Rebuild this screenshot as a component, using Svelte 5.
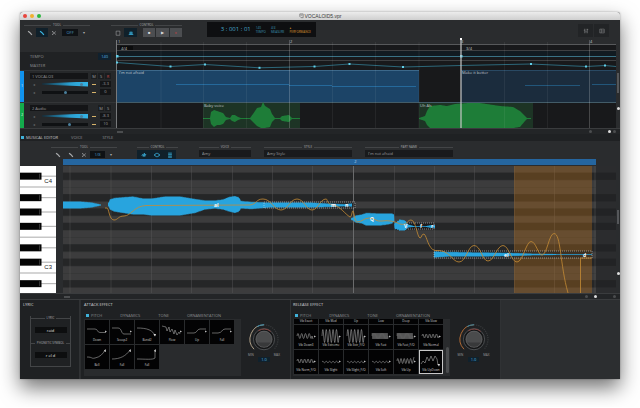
<script>
  const envelope = (pts, jag = 0) => {
    const top = [], bottom = [];
    for (let i = 0; i < pts.length - 1; i++) {
      const [x0, a0, b0] = pts[i], [x1, a1, b1] = pts[i + 1];
      for (let x = x0; x < x1; x += 1) {
        const t = (x - x0) / (x1 - x0);
        const thick = b0 + (b1 - b0) * t - (a0 + (a1 - a0) * t);
        const n = Math.round(x) % 2 ? Math.min(jag, thick / 5) : 0;
        top.push([x, a0 + (a1 - a0) * t + n]);
        bottom.push([x, b0 + (b1 - b0) * t - n]);
      }
    }
    const last = pts[pts.length - 1];
    top.push([last[0], last[1]]);
    bottom.push([last[0], last[2]]);
    return [...top, ...bottom.reverse()].map((p) => p.map((v) => v.toFixed(1)).join(',')).join(' ');
  };

  // Arrangement view
  const arrLines = [161, 203.5, 246.5, 332.5, 375.5, 419, 504.5, 547.5];
  const barLines = [289.5, 589.5];
  const master = [[117, 62.5], [170.5, 66.5], [205, 64.5], [259.5, 67.8], [314.5, 66.5], [349.5, 64], [403, 67], [461, 65.5], [531, 64], [586, 66.5], [605, 65.5], [616, 66.5]];
  const masterDots = master.filter((p) => p[0] !== 461 && p[0] !== 616);
  const greenWaves = [
    [[203, 118, 119], [210, 118, 119], [211, 112, 124], [214, 110, 127], [217, 111, 125], [220, 112, 125], [223, 113, 124], [226, 117, 120], [230, 118, 119], [232, 115, 121], [235, 115, 122], [238, 117, 120], [241, 118, 119], [250, 118, 119], [253, 114, 122], [257, 108, 126], [261, 107, 128], [263, 102, 128], [265, 106, 128], [270, 109, 127], [272, 114, 122], [275, 118, 119], [280, 118, 119], [282, 116, 121], [289, 115, 122], [292, 118, 119], [300, 118, 119]],
    [[419, 118, 119], [425, 116, 121], [427, 111, 125], [430, 106, 128], [440, 105, 128], [447, 106, 128], [455, 104, 128], [468, 103, 128], [480, 103, 128], [500, 106, 128], [513, 107, 128], [520, 111, 127], [525, 116, 121], [527, 118, 119], [531, 118, 119]]
  ];
  const arrLabels = [
    { x: 119, y: 70, text: "I'm not afraid" }, { x: 462, y: 70, text: 'Make it better' },
    { x: 204, y: 103, text: 'Baby voice' }, { x: 420, y: 103, text: 'Uh Ah' },
    { x: 121, y: 46, text: '4/4' }, { x: 466, y: 46, text: '3/4' },
    { x: 118, y: 39, text: '1' }, { x: 290, y: 39, text: '2' }, { x: 461, y: 39, text: '3' }, { x: 590, y: 39, text: '4' }
  ];

  // Piano roll
  const pitch = 86 / 12;
  const rows = Array.from({ length: 18 }, (_, i) => {
    const semitone = (((2 - i) % 12) + 12) % 12;
    return { y: 165.5 + i * pitch, black: [1, 3, 6, 8, 10].includes(semitone), semitone };
  });
  const blackRows = rows.filter((r) => r.black);
  const beats = [70, 111, 151.5, 191.5, 232.5, 272.5, 312.5, 394.5, 434.5, 474.5, 514.5, 554.5, 595];
  const notes = [
    [[63, 201, 209], [80, 201, 209], [92, 202, 208], [98, 203.5, 206.5], [101, 204.5, 205.5]],
    [[108, 203, 206], [110, 199, 210], [114, 197.5, 212], [120, 197, 213], [133, 196, 215], [143, 198, 215], [152, 198, 216], [165, 196, 216], [180, 196, 216], [195, 198.5, 213.5], [205, 200, 210], [215, 200, 209], [223, 199, 210], [229, 196.5, 212], [235, 195.5, 213.5], [239, 197, 212], [241, 200.5, 209], [252, 201.5, 209.5], [270, 202, 208], [310, 202, 208], [328, 203, 207.5], [345, 204, 206.5], [352, 203, 207]],
    [[351, 218, 220], [356, 215, 223], [362, 214, 224], [366, 212.5, 226], [380, 213, 226], [388, 213, 225], [392, 213, 224], [394, 214, 222], [394.5, 223, 229], [400, 219, 231], [405, 220, 231], [408, 224, 228], [414, 226, 227], [426, 226, 227], [430, 225, 228], [435, 225, 228]],
    [[434, 251, 258], [450, 251.5, 257], [480, 252, 257], [510, 252.5, 256.5], [535, 253.5, 255.5], [560, 254, 255], [580, 254, 255], [592, 254, 255]]
  ].map((p) => envelope(p, 1));
  const outlines = [[264, 202, 91, 6], [407, 223, 27, 6], [434, 251, 158, 7]];
  const pitchCurve = 'M105,208 H107 C109,208 109,220 114,220 C118,220 118,216 124,216 C131,216 134,206 146,205.500 L250,205 C257,204 256,199 263,199 C271,199 274,210 281,210 C288,210 290,199 297,199 C304,199 306,210 312,210 C318,210 320,199 326,199 C328,199 326,204 333,205 C340,206 345,214 350,217 C352,217 352,210 353,211 S355,222 357,222 C362,222 364,218 369,218 C375,218 376,222 382,221 C390,220 396,222 400,224 C407,226 407,220 411,220 C416,220 417,237 420,238 C422,238 421,234 424,234 C427,236 428,249 435,250.500 C450,249 452,262 459,262 C466,262 468,245.500 474,245.500 C481,245.500 482,261 488,261 C494,261 497,245.500 503,245.500 C509,245.500 511,262 517,262 C523,262 526,241.500 531,241.500 C536,241.500 538,255 542,255 C547,255 549,233.500 554,233.500 C561,233.500 560,265 568,293 M580.500,293 V258 H592';
  const phonemes = [
    { x: 214, y: 202, text: 'aI' }, { x: 331, y: 202, text: 'm' }, { x: 345, y: 202, text: 'n' }, { x: 370, y: 216, text: 'Q' },
    { x: 404, y: 223, text: 'V' }, { x: 420, y: 223, text: 'f' }, { x: 431, y: 223, text: 'r' }, { x: 504, y: 252, text: 'eI' }, { x: 583, y: 252, text: 'd' }
  ];

  const tracks = [
    { name: '1 VOCALO3', no: '1', color: '#1193ee', buttons: ['M', 'S', 'R'], gain: '-3.3', pan: '0', panAt: 50, tall: true },
    { name: '2 Audio', no: '2', color: '#14ab4c', buttons: ['M', 'S'], gain: '-8.3', pan: '10', panAt: 60, tall: false }
  ];

  // Effect thumbnails are drawn on a 24 x 18 grid
  const zig = (x, y, w, n, h) => {
    let d = `M${x},${y}`;
    for (let i = 0; i < n; i++) d += ` q${w / n / 4},${-h} ${w / n / 2},0 q${w / n / 4},${h} ${w / n / 2},0`;
    return d;
  };
  const attack = [
    { name: 'Down', d: 'M2,9 H10 C13,9 12,12.500 15,12.500 H21' },
    { name: 'Scoop2', d: 'M2,8 H8 C12,8 11,14 14,14 H21' },
    { name: 'Bend2', d: 'M2,8 C12,8 18,10 20,16', down: true },
    { name: 'Flow', d: 'M2,6 L6,7 L7,11 L9,7 L10,12 L12,9 L14,14 L15,10 L17,15 L19,12 L20,14' },
    { name: 'Up', d: 'M2,13 H9 C12,13 12,9 15,9 H21' },
    { name: 'Fall', d: 'M2,13 H8 C12,13 12,9 15,9 H21' },
    { name: 'Bell', d: 'M2,12 C8,12 6,14 10,13 C15,12 18,9 20,5', up: true },
    { name: 'Fall', d: 'M2,14 C10,14 16,11 20,5', up: true },
    { name: 'Fall', d: 'M2,14 C10,14 18,15 20,13 V5', up: true }
  ];
  const release = [
    { name: 'Vib Exact' }, { name: 'Vib Med' }, { name: 'Up' }, { name: 'Low' }, { name: 'Deep' }, { name: 'Vib Slow' },
    { name: 'Vib Down3', d: zig(3, 11, 15, 4, 5) + ' L19,14' },
    { name: 'Vib Extreme', d: zig(3, 11, 17, 5, 13) },
    { name: 'Vib Extr_F/O', d: zig(3, 11, 17, 5, 13) },
    { name: 'Vib Fast', d: zig(3, 11, 16, 14, 6), dense: true },
    { name: 'Vib Fast_F/O', d: zig(3, 11, 16, 14, 6), dense: true },
    { name: 'Vib Normal', d: zig(3, 11, 17, 5, 4) },
    { name: 'Vib Norm_F/O', d: zig(3, 11, 17, 5, 4) },
    { name: 'Vib Slight', d: zig(3, 12, 17, 5, 1.5) },
    { name: 'Vib Slight_F/O', d: zig(3, 12, 17, 5, 1.5) },
    { name: 'Vib Soft', d: zig(3, 12, 17, 5, 1.5) },
    { name: 'Vib Up', d: zig(3, 11, 16, 5, 5) + ' L20,7' },
    { name: 'Vib UpDown', d: 'M2,14 L4,11 L6,13 L8,7 L10,11 L12,6 L14,11 L16,6 L18,9 L19,15', down: true, selected: true }
  ];
  const fxTabs = ['PITCH', 'DYNAMICS', 'TONE', 'ORNAMENTATION'];
</script>

{#snippet tool(kind)}
  <svg class="icon" viewBox="0 0 8 8" aria-hidden="true">
    {#if kind === 'pencil'}
      <path d="M1.500 1.500 L3.500 3.500 M3 2.500 L6.500 6.500" stroke="currentColor" stroke-width="1.600" fill="none" />
    {:else if kind === 'cut'}
      <path d="M1.500 2 L6.500 6 M1.500 6 L6.500 2 M1.500 2 H3 M1.500 6 H3" stroke="currentColor" stroke-width=".8" fill="none" />
    {:else if kind === 'snap'}
      <path d="M1.500 1.500 V7 H6.500 V1.500 M1.500 1.500 H6.500" stroke="currentColor" stroke-width=".7" fill="none" />
    {:else if kind === 'metronome'}
      <path d="M1 6 H7 M1.500 4 H6.500 M3 2 V6 M5 2 V6" stroke="currentColor" fill="none" />
    {:else if kind === 'wave'}
      <path d="M1 5 L2.500 3 L3 6 L4.500 1.500 L5 6 L6 3 L7 4" stroke="currentColor" fill="none" />
    {:else if kind === 'loop'}
      <path d="M1 4 C1 1 7 1 7 4 C7 7 1 7 1 4 M0 4 H2 M6 4 H8" stroke="currentColor" fill="none" />
    {:else if kind === 'list'}
      <path d="M1.500 1.500 H6.500 M1.500 3.500 H6.500 M1.500 5.500 H6.500 M1.500 7 H6.500" stroke="currentColor" fill="none" />
    {:else if kind === 'mixer'}
      <path d="M2 1 V7 M4 1 V7 M6 1 V7 M1 3 H3 M3 5 H5 M5 2 H7" stroke="currentColor" stroke-width=".6" fill="none" />
    {:else if kind === 'media'}
      <path d="M1 1.500 H7 V6.500 H1 Z M3 1.500 V6.500 M3 4 H7" stroke="currentColor" stroke-width=".7" fill="none" />
    {/if}
  </svg>
{/snippet}

{#snippet thumb(fx)}
  <button class="thumb" class:selected={fx.selected}>
    {#if fx.d}
      <svg viewBox="0 0 24 18" aria-hidden="true">
        <path d={fx.d} fill="none" stroke={fx.dense ? '#777' : '#a5a5a5'} stroke-width=".6" />
        {#if fx.down}<path d="M18.500 14 H21 L20 16.500 Z" fill="#ddd" />
        {:else if fx.up}<path d="M19 6 L20.500 4 L21 7 Z" fill="#ddd" />
        {:else}<path d="M20 10.500 L22 11.500 L20 12.500 Z" fill="#bbb" />{/if}
      </svg>
    {/if}
    <span>{fx.name}</span>
  </button>
{/snippet}

{#snippet tabs()}
  <nav class="fx-tabs">
    {#each fxTabs as t, i}<button class:on={i === 0}>{#if i === 0}<i class="led"></i>{/if}{t}</button>{/each}
  </nav>
{/snippet}

{#snippet dial(warm)}
  <div class="dial">
    <svg viewBox="0 0 36 30" aria-hidden="true">
      <path d="M9 26 A13 13 0 0 1 18 4" fill="none" stroke={warm ? '#b06a35' : '#b0a088'} stroke-width=".9" />
      <path d="M12 5.500 A13 13 0 0 1 18 4" fill="none" stroke="#2a86ad" stroke-width=".9" />
      <path d="M18 4 A13 13 0 0 1 27 26" fill="none" stroke="#3b3d3f" stroke-width="1" stroke-dasharray="1 1" />
      <circle cx="18" cy="17" r="9.500" fill="#141516" stroke="#5c5e60" stroke-width=".7" />
      <path d="M13 9.500 A9 9 0 0 1 24 10" fill="none" stroke="#8a4540" stroke-width=".8" />
      <circle cx="18" cy="17" r="7.300" fill="#4a4b4c" stroke="#77787a" stroke-width=".5" />
      <path d="M12 20 A6.600 6.600 0 0 0 24 20 Z" fill="#38393a" />
    </svg>
    <div class="minmax"><span>MIN</span><span>MAX</span></div>
    <output>1.0</output>
  </div>
{/snippet}

<main>
  <header class="title">
    <span class="lights"><i class="r"></i><i class="y"></i><i class="g"></i></span>
    <h1><svg viewBox="0 0 6 6" aria-hidden="true"><path d="M1 .500 H5 V5 H2.500 L1 3.500 Z M2 2 H4" fill="none" stroke="#555" stroke-width=".7" /></svg>VOCALOID5.vpr</h1>
  </header>

  <div class="toolbar">
    <div class="group tools">
      <div class="cap">TOOL</div>
      <div class="btns">
        <button aria-label="Pencil">{@render tool('pencil')}</button>
        <button class="on wide" aria-label="Brush">{@render tool('pencil')}</button>
        <button aria-label="Scissors">{@render tool('cut')}</button>
        <select class="quant" aria-label="Quantize"><option>OFF</option></select>
        <button aria-label="More">▾</button>
      </div>
    </div>
    <div class="group control">
      <div class="cap">CONTROL</div>
      <div class="btns">
        <button class="wide" aria-label="Snap">{@render tool('snap')}</button>
        <button class="on wide" aria-label="Metronome">{@render tool('metronome')}</button>
        <span class="transport">
          <button aria-label="Stop">■</button><button aria-label="Play">▶</button><button class="rec" aria-label="Record">●</button>
        </span>
      </div>
    </div>
    <div class="lcd">
      <strong>3 : 001 : 01</strong>
      <span>140<br />TEMPO</span><span>4/4<br />MEASURE</span><span class="perf">●<br />PERFORMANCE</span>
    </div>
    <div class="views">
      <button aria-label="Mixer">{@render tool('mixer')}</button>
      <button aria-label="Media">{@render tool('media')}</button>
    </div>
  </div>

  <section class="arrange">
    <aside>
      <div class="lane tempo"><span>TEMPO</span><output>140</output></div>
      <div class="lane">MASTER</div>
      {#each tracks as t}
        <div class="track" class:tall={t.tall}>
          <i class="strip" style="background:{t.color}">{t.no}</i>
          <div class="strip-body">
            <div class="line"><input type="text" value={t.name} aria-label="Track name" />
              <span class="msr">{#each t.buttons as b}<button class:rec={b === 'R'}>{b}</button>{/each}</span></div>
            <div class="line"><i class="spk">◂</i><input class="vol" type="range" value="88" aria-label="Volume" /><i class="mark"></i><output>{t.gain}</output></div>
            <div class="line"><i class="spk">◂</i><input class="pan" type="range" value={t.panAt} aria-label="Pan" /><i class="mark"></i><output>{t.pan}</output></div>
          </div>
        </div>
      {/each}
    </aside>
    <div class="canvas time">
      <svg viewBox="116 38 500 90" preserveAspectRatio="none" aria-hidden="true">
        <rect x="116" y="38" width="500" height="90" fill="#18191b" />
        <rect x="116" y="38" width="500" height="6" fill="#2a2c2e" />
        <rect x="116" y="44" width="500" height="1" fill="#57595b" />
        <rect x="120" y="46" width="13" height="4" fill="#0b0c0d" />
        <path d="M116,50.500 H616 M116,60.500 H616" stroke="#3e4042" />
        <rect x="116" y="51" width="500" height="5" fill="#111b21" />
        <path d="M116,56.500 H616" stroke="#397285" />
        <polyline points={master.join(' ')} fill="none" stroke="#2f7085" stroke-width=".9" />
        <rect x="117" y="70" width="302" height="32" fill="#1c4467" />
        <rect x="461" y="70" width="155" height="32" fill="#1b2c3d" />
        <path d="M117,70.500 H419" stroke="#3c688a" /><path d="M461,70.500 H616" stroke="#294963" />
        <path d="M116,102.500 H616" stroke="#435c68" />
        <path d="M176,84.500 H289 M289,85.500 H332 M332,86.500 H416" stroke="#2872a8" stroke-width=".8" />
        <path d="M525,85.500 H580 M592,84.500 H616" stroke="#24618a" stroke-width=".8" />
        <rect x="203" y="103" width="97" height="25" fill="#1d3425" />
        <rect x="419" y="103" width="114" height="25" fill="#1d3425" />
        {#each greenWaves as w}<polygon points={envelope(w)} fill="#1e7d38" />{/each}
        {#each arrLines as x}<path d="M{x},42 V128" stroke="#fff" stroke-opacity=".06" />{/each}
        {#each barLines as x}<path d="M{x},40 V128" stroke="#fff" stroke-opacity=".2" />{/each}
        <path d="M116.500,40 V128" stroke="#77797b" />
        {#each masterDots as p}<rect x={p[0] - 1} y={p[1] - 1} width="2" height="2" fill="#62cfe8" />{/each}
        <rect x="116" y="55" width="2.500" height="2.500" fill="#62cfe8" />
        <rect x="460" y="55" width="2.500" height="2.500" fill="#62cfe8" />
        <path d="M461,39 V128" stroke="#c8c8c8" stroke-width="1.200" /><rect x="460" y="38" width="2" height="2" fill="#fff" />
      </svg>
      {#each arrLabels as l}<span class="tag" style="left:{(l.x - 116) / 5}%;top:{l.y - 38}px">{l.text}</span>{/each}
    </div>
    <div class="vbar"><i class="thumb-v"></i><i class="dot"></i></div>
  </section>
  <div class="hbar"><i class="grip at-time"></i><span class="zoom"><i></i><b></b><i></i></span></div>

  <nav class="editor-tabs">
    <button class="on"><i class="led"></i>MUSICAL EDITOR</button><button>VOICE</button><button class="last">STYLE</button>
  </nav>

  <div class="toolbar editor">
    <div class="group tools">
      <div class="cap">TOOL</div>
      <div class="btns">
        <button class="wide" aria-label="Pencil">{@render tool('pencil')}</button>
        <button class="wide" aria-label="Brush">{@render tool('pencil')}</button>
        <button class="wide" aria-label="Scissors">{@render tool('cut')}</button>
        <select class="quant" aria-label="Grid"><option>1/8</option></select>
        <button aria-label="More">▾</button>
      </div>
    </div>
    <div class="group display">
      <div class="cap">CONTROL</div>
      <div class="btns">
        <button class="on wide" aria-label="Waveform">{@render tool('wave')}</button>
        <button class="on wide" aria-label="Pitch">{@render tool('loop')}</button>
        <button class="on wide" aria-label="Phonemes">{@render tool('list')}</button>
      </div>
    </div>
    <label class="field voice"><span class="cap">VOICE</span><input value="Amy" /></label>
    <label class="field style"><span class="cap">STYLE</span><input value="Amy Style" /></label>
    <label class="field part"><span class="cap">PART NAME</span><input value="I'm not afraid" /></label>
  </div>

  <section class="roll">
    <div class="keys">
      <svg viewBox="20 166 36 127" preserveAspectRatio="none" aria-hidden="true">
        <rect x="20" y="166" width="36" height="127" fill="#fff" />
        {#each rows as r}
          {#if r.semitone === 0 || r.semitone === 5}<rect x="20" y={r.y + pitch - 0.5} width="36" height="1" fill="#aaa" />{/if}
        {/each}
        {#each blackRows as r}
          <rect x="41" y={r.y + 3} width="15" height="1" fill="#aaa" />
          <rect x="20" y={r.y} width="21.500" height="7" fill="#050505" /><rect x="39" y={r.y + 1} width="1" height="5" fill="#333" />
        {/each}
      </svg>
      <span class="c4">C4</span><span class="c3">C3</span>
    </div>
    <div class="notes">
      <div class="region"><i>2</i></div>
      <div class="canvas grid">
        <svg viewBox="63 166 553 127" preserveAspectRatio="none" aria-hidden="true">
          <rect x="63" y="166" width="533" height="127" fill="#3c3c3d" />
          <rect x="596" y="166" width="20" height="127" fill="#2b2c2e" />
          {#each rows as r}<rect x="63" y={r.y} width="533" height=".6" fill="#333435" />{/each}
          {#each blackRows as r}
            <rect x="63" y={r.y} width="533" height={pitch} fill="#252627" /><rect x="596" y={r.y} width="20" height={pitch} fill="#222325" />
          {/each}
          {#each beats as x}<path d="M{x},166 V293" stroke="#5a5b5c" stroke-opacity=".5" stroke-width=".8" />{/each}
          <path d="M353.500,166 V293" stroke="#6a6b6c" />
          <rect x="514" y="166" width="78" height="127" fill="#b46c1a" fill-opacity=".36" />
          {#each outlines as o}<rect x={o[0]} y={o[1]} width={o[2]} height={o[3]} fill="#101214" fill-opacity=".45" />{/each}
          {#each notes as n}<polygon points={n} fill="#28a4de" />{/each}
          {#each outlines as o}<rect x={o[0]} y={o[1]} width={o[2]} height={o[3]} fill="none" stroke="#e5e5e5" stroke-opacity=".75" stroke-width=".7" stroke-dasharray="1 1" />{/each}
          <path d={pitchCurve} fill="none" stroke="#c58c35" stroke-width=".8" />
        </svg>
        {#each phonemes as p}<span class="phon" style="left:{(p.x - 63) / 5.53}%;top:{p.y - 166}px">{p.text}</span>{/each}
      </div>
    </div>
    <div class="vbar"><i class="thumb-v"></i><i class="dot"></i></div>
  </section>
  <div class="hbar"><i class="grip at-roll"></i><span class="zoom even"><i></i><b></b><i></i></span></div>

  <footer>
    <section class="panel lyric">
      <h2>LYRIC</h2>
      <div class="box">
        <label><span class="cap">LYRIC</span><input value="raid" /></label>
        <label><span class="cap">PHONETIC SYMBOL</span><input value="r eI d" /></label>
      </div>
    </section>
    <section class="panel attack">
      <h2>ATTACK EFFECT</h2>
      <div class="fx">
        <div class="browser">{@render tabs()}
          <div class="list">{#each attack as a}{@render thumb(a)}{/each}</div>
        </div>
        {@render dial(false)}
      </div>
    </section>
    <section class="panel release">
      <h2>RELEASE EFFECT</h2>
      <div class="fx">
        <div class="browser">{@render tabs()}
          <div class="list scrolled">{#each release as a}{@render thumb(a)}{/each}<i class="scroller"></i></div>
        </div>
        {@render dial(true)}
      </div>
    </section>
  </footer>
</main>

<style>
  :global(body) { background: #fff; }
  main {
    margin: 12px 20px 28px;
    background: #2a2c2e;
    border-radius: 3px 3px 0 0;
    box-shadow: 0 9px 20px rgba(0, 0, 0, .55), 0 0 2px rgba(0, 0, 0, .35);
    font: 4px/5px "Open Sans", "Liberation Sans", sans-serif;
    color: #9a9c9e;
  }
  main :global(*) { box-sizing: border-box; }
  h1, h2 { margin: 0; font-weight: 400; }
  i { font-style: normal; }
  button, input, select { font: inherit; color: inherit; border: 0; margin: 0; padding: 0; background: none; min-width: 0; border-radius: 0; display: block; }
  select { appearance: none; }
  svg { display: block; }

  .title { height: 8px; border-radius: 3px 3px 0 0; background: linear-gradient(#ececec, #cfcfcf); position: relative; display: flex; align-items: center; justify-content: center; }
  .title h1 { display: flex; align-items: center; gap: 1px; color: #3c3c3c; font: 5px/8px "Liberation Sans", sans-serif; }
  .title h1 svg { width: 5px; height: 6px; }
  .lights { position: absolute; left: 3px; display: flex; gap: 3px; }
  .lights i { width: 4px; height: 4px; border-radius: 50%; }
  .r { background: #e8453d; } .y { background: #f0b02e; } .g { background: #2cb83e; }

  .toolbar { height: 18px; padding: 3px 11px 0 4px; display: flex; }
  .cap { display: flex; align-items: center; gap: 2px; font-size: 3px; line-height: 4px; height: 4px; color: #a8aaac; white-space: nowrap; }
  .cap::before, .cap::after { content: ''; flex: 1; height: 1px; background: #434547; }
  .tools { width: 66px; }
  .control { width: 71px; margin-left: 21px; }
  .btns { display: flex; align-items: center; margin-top: 1px; height: 9px; }
  .btns button { width: 12px; height: 9px; display: flex; align-items: center; justify-content: center; color: #a9abad; }
  .btns .wide { width: 13px; }
  .btns .on { color: #3bb4e0; background: #10202a; }
  .icon { width: 6px; height: 6px; }
  .quant { width: 17px; height: 7px; background: #0f1215; color: #4a9cc8; text-align: center; text-align-last: center; line-height: 7px; margin-left: 2px; }
  .transport { display: flex; flex: 1; gap: 1px; margin-left: 6px; }
  .transport button { flex: 1; background: #4c4e51; color: #ddd; }
  .transport .rec { color: #a04444; }
  .lcd { width: 109px; height: 15px; margin: -1px auto 0 25px; background: #0e0f11; display: flex; align-items: center; justify-content: flex-end; gap: 5px; padding-right: 5px; color: #3c94b4; font-size: 3px; line-height: 4px; }
  .lcd strong { font: 6px/9px "Open Sans", sans-serif; color: #48a9ca; white-space: nowrap; }
  .lcd .perf { color: #dd962f; }
  .views { display: flex; gap: 1px; margin-top: 1px; }
  .views button { width: 15px; height: 13px; background: #222426; display: flex; align-items: center; justify-content: center; color: #8a8c8e; }

  .arrange { display: flex; height: 90px; }
  aside { width: 96px; padding-top: 14px; overflow: hidden; background: linear-gradient(#2a2c2e 14px, #202224 14px); }
  .lane { height: 9px; padding: 0 5px 0 10px; display: flex; align-items: center; justify-content: space-between; font-size: 4px; color: #8c8e90; }
  .lane output { background: #10212e; color: #58b7e0; padding: 1px 3px; line-height: 5px; }
  .track { display: flex; height: 26px; overflow: hidden; border-top: 1px solid #333537; background: #26282a; }
  .tall { height: 32px; }
  .strip { width: 4px; color: #fff; display: flex; align-items: center; justify-content: center; font-size: 3px; }
  .strip-body { flex: 1; padding: 2px 5px 0 6px; }
  .line { display: flex; align-items: center; justify-content: space-between; height: 6px; margin-bottom: 2px; }
  .line input[type='text'] { width: 58px; height: 6px; background: #141517; padding-left: 2px; color: #9a9c9e; }
  .msr { display: flex; gap: 1px; }
  .msr button { width: 6px; height: 6px; background: #1b1d1f; }
  .msr .rec { color: #c04848; }
  .spk { width: 8px; text-align: center; color: #66686a; }
  .mark { width: 4px; height: 1px; background: #d6b36a; }
  .line output { width: 11px; height: 6px; background: #141517; text-align: center; }
  input[type='range'] { appearance: none; width: 46px; height: 3px; background: #0f1113; }
  input[type='range'].vol { height: 5px; background: linear-gradient(90deg, #123040, #2a9fd0 60%, #35b4e6); clip-path: polygon(0 40%, 100% 0, 100% 100%, 0 60%); }
  input[type='range']::-webkit-slider-thumb { appearance: none; width: 3px; height: 3px; border-radius: 50%; background: #4a7f9c; }

  .canvas { position: relative; flex: 1; min-width: 0; overflow: hidden; }
  .canvas svg { width: 100%; height: 100%; }
  .tag, .phon { position: absolute; white-space: nowrap; color: #c0c8cd; font-size: 4px; line-height: 5px; }
  .phon { color: #fff; font-weight: 700; font-size: 5px; line-height: 6px; }
  .vbar { width: 4px; background: #2a2c2e; display: flex; flex-direction: column; align-items: center; justify-content: flex-end; gap: 14px; padding-bottom: 18px; }
  .thumb-v { width: 2px; height: 20px; background: #55575a; }
  .dot { width: 3px; height: 3px; background: #ddd; border-radius: 50%; }
  .roll .vbar { gap: 48px; }
  .roll .thumb-v { height: 14px; }
  .hbar { height: 6px; background: #232527; border-top: 1px solid #3a3c3e; display: flex; align-items: center; justify-content: space-between; padding-right: 4px; }
  .grip { width: 6px; height: 2px; background: #4b4d4f; }
  .at-time { margin-left: 97px; } .at-roll { margin-left: 44px; }
  .zoom { display: flex; align-items: center; gap: 2px; }
  .zoom.even { gap: 6px; }
  .zoom i { width: 3px; height: 3px; border-radius: 50%; background: #4b4d4f; }
  .zoom i:first-child { margin-right: 14px; } .zoom.even i:first-child { margin-right: 0; } .zoom.even i:last-child { margin-left: 10px; }
  .zoom b { width: 3px; height: 3px; border-radius: 50%; background: #ddd; }

  .editor-tabs { height: 7px; background: #1f2123; display: flex; gap: 12px; }
  .editor-tabs button { display: flex; align-items: center; gap: 2px; padding: 0 1px; line-height: 7px; color: #8d8f91; }
  .editor-tabs .on { color: #c6c8ca; padding-right: 0; }
  .editor-tabs .last { margin-left: 6px; }
  .led { width: 3px; height: 3px; background: #3fb1d9; }
  .editor { height: 18px; padding: 4px 0 0 31px; }
  .display { width: 41px; margin-left: 20px; }
  .editor .quant { width: 15px; margin: 0; }
  .field { display: block; min-width: 0; }
  .field input { width: 100%; height: 7px; background: #191a1c; padding-left: 3px; margin-top: 1px; }
  .voice { width: 52px; margin-left: 21px; } .style { width: 88px; margin-left: 13px; } .part { width: 88px; margin-left: 13px; }

  .roll { display: flex; height: 134px; }
  .keys { width: 36px; margin: 7px 7px 0 0; position: relative; color: #222; font: 6px/7px "Liberation Sans", sans-serif; }
  .keys svg { width: 100%; height: 127px; }
  .keys span { position: absolute; right: 4px; }
  .c4 { top: 12px; } .c3 { top: 98px; }
  .notes { flex: 1; min-width: 0; }
  .region { margin: 0 20px 1px 0; height: 6px; background: #2566a0; text-align: center; line-height: 6px; padding-left: 52px; color: #bcd9ee; }
  .grid { height: 127px; }

  footer { display: flex; height: 80px; border-top: 1px solid #3a3c3e; background: #2c2e30; }
  .panel { background: #1f2123; padding: 2px 3px; border-right: 1px solid #303234; min-width: 0; }
  h2 { font-size: 4px; line-height: 5px; color: #d5d7d9; }
  .lyric { width: 60px; }
  .box { margin: 9px 5px 0 7px; border: 1px solid #434547; border-top: 0; height: 51px; }
  .box label { display: block; height: 25px; }
  .box input { display: block; margin: 7px auto 0; width: 32px; height: 6px; background: #0d0e0f; color: #e2e2e2; text-align: center; }
  .attack { width: 210px; margin-left: 1px; } .release { width: 210px; padding-left: 2px; }
  .fx { display: flex; margin-top: 5px; }
  .browser { width: 157px; }
  .fx-tabs { display: flex; gap: 18px; height: 7px; padding-left: 2px; }
  .fx-tabs button { display: flex; align-items: center; gap: 2px; color: #8a8c8e; line-height: 6px; }
  .list { position: relative; display: grid; grid-template-columns: repeat(6, 24px); grid-auto-rows: 24px; gap: 1px; height: 57px; padding: 1px; background: #292b2d; align-content: start; }
  .scrolled { grid-template-rows: 5px; padding-top: 0; }
  .thumb { background: #030304; display: flex; flex-direction: column; align-items: center; }
  .thumb svg { width: 24px; height: 18px; }
  .thumb span { font-size: 3px; line-height: 4px; color: #d0d0d0; white-space: nowrap; }
  .thumb.selected { outline: 1px solid #c8c8c8; outline-offset: -1px; }
  .scroller { position: absolute; right: 1px; bottom: 3px; width: 3px; height: 26px; background: #4a4c4e; border-radius: 2px; }
  .dial { flex: 1; display: flex; flex-direction: column; align-items: center; padding-top: 8px; }
  .dial svg { width: 40px; height: 34px; }
  .minmax { width: 32px; display: flex; justify-content: space-between; font-size: 3px; line-height: 4px; margin-top: -1px; }
  .dial output { background: #10212c; color: #4fb9e6; padding: 0 3px; line-height: 5px; }
</style>
